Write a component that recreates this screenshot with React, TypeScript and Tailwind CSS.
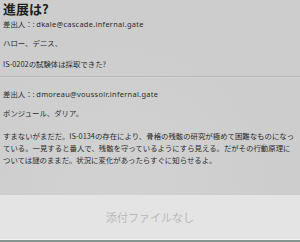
import React from "react";

const FONT = { fontFamily: '"Noto Sans CJK JP", "Noto Sans", sans-serif' };
const LATIN = { fontFamily: '"Noto Sans", "Noto Sans CJK JP", sans-serif' };

type Mail = {
  from: string;
  lines: string[];
};

const MAILS: Mail[] = [
  {
    from: "dkale@cascade.infernal.gate",
    lines: ["ハロー、デニス、", "IS-0202の試験体は採取できた?"],
  },
];

export default function App() {
  return (
    <div
      className="w-[300px] h-[242px] flex flex-col bg-[#cdcdcd] text-[#2b2b2b] overflow-hidden"
      style={FONT}
    >
      <main className="flex-1 bg-[radial-gradient(circle_at_40%_100%,#d2d2d2_0%,#cdcdcd_60%)]">
        <h1 className="mt-px ml-[3px] h-[15px] text-[13px] leading-[15px] font-bold text-[#1e1e1e]">
          進展は?
        </h1>

        {MAILS.map((m) => (
          <div key={m.from} className="px-[3px]">
            <p className="mt-[2px] text-[7.4px] leading-[12px]">
              差出人：: <span className="tracking-[0.3px]" style={LATIN}>{m.from}</span>
            </p>
            <p className="mt-[7px] text-[7.4px] leading-[12px]">{m.lines[0]}</p>
            <p className="mt-[9px] text-[7.4px] leading-[12px]">{m.lines[1]}</p>
          </div>
        ))}

        <div className="mt-[6px] h-[2px] border-t border-[#b8b8b8] bg-[#d4d4d4]" />

        <div className="px-[3px]">
          <p className="mt-[10px] text-[7.4px] leading-[12px]">
            差出人：:{" "}
            <span className="tracking-[0.3px]" style={LATIN}>
              dmoreau@voussoir.infernal.gate
            </span>
          </p>
          <p className="mt-[7px] text-[7.4px] leading-[12px]">
            ボンジュール、ダリア。
          </p>
          <p className="mt-[11px] text-[7.4px] leading-[12px] pr-[2px]">
            すまないがまだだ。IS-0134の存在により、骨格の残骸の研究が極めて困難なものになっている。一見すると番人で、残骸を守っているようにすら見える。だがその行動原理については謎のままだ。状況に変化があったらすぐに知らせるよ。
          </p>
        </div>
      </main>

      <footer className="h-[47px] flex flex-col bg-[#e4e4e4]">
        <div className="flex-1 flex items-center justify-center text-[11px] text-[#b9b9b9]">
          添付ファイルなし
        </div>
        <div className="h-px bg-[#f2f2f2]" />
        <div className="h-[2px] bg-[#86958f]" />
      </footer>
    </div>
  );
}
